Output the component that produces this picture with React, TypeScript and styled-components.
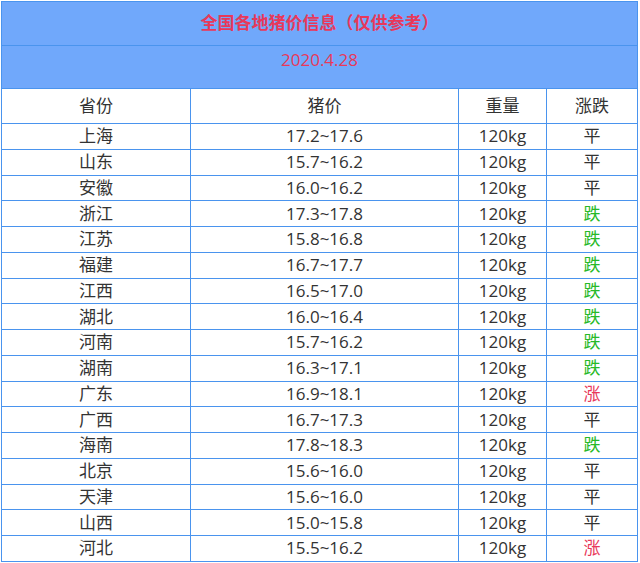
import React from 'react';
import styled, { createGlobalStyle } from 'styled-components';

const GlobalStyle = createGlobalStyle`
    body {
        margin: 0;
        background: #ffffff;
        font-family: 'Open Sans', 'Noto Sans CJK SC', sans-serif;
    }
`;

const COLORS = {
    line: '#4a94ee',
    headBg: '#70a8fb',
    red: '#e8385a',
    green: '#27b927',
    text: '#333333',
};

const Wrapper = styled.div`
    padding: 1px 0 0 1px;
`;

const Table = styled.table`
    width: 636px;
    border-collapse: collapse;
    table-layout: fixed;
    border: 1px solid ${COLORS.line};
    color: ${COLORS.text};
    font-size: 17px;
`;

const TitleRow = styled.tr<{ $height: number }>`
    height: ${(p) => p.$height}px;
`;

const TitleCell = styled.td<{ $bold?: boolean }>`
    background: ${COLORS.headBg};
    color: ${COLORS.red};
    font-weight: ${(p) => (p.$bold ? 700 : 400)};
    text-align: center;
    vertical-align: top;
    line-height: 20px;
    padding: ${(p) => (p.$bold ? '11px 0 0' : '4px 0 0')};
    border: 1px solid ${COLORS.line};
`;

const Row = styled.tr<{ $height: number }>`
    height: ${(p) => p.$height}px;
`;

const Cell = styled.td<{ $color?: string }>`
    padding: 0;
    border: 1px solid ${COLORS.line};
    text-align: center;
    line-height: 20px;
    color: ${(p) => p.$color || COLORS.text};
`;

type Trend = '平' | '跌' | '涨';

interface PriceRow {
    province: string;
    price: string;
    trend: Trend;
}

const rows: PriceRow[] = [
    { province: '上海', price: '17.2~17.6', trend: '平' },
    { province: '山东', price: '15.7~16.2', trend: '平' },
    { province: '安徽', price: '16.0~16.2', trend: '平' },
    { province: '浙江', price: '17.3~17.8', trend: '跌' },
    { province: '江苏', price: '15.8~16.8', trend: '跌' },
    { province: '福建', price: '16.7~17.7', trend: '跌' },
    { province: '江西', price: '16.5~17.0', trend: '跌' },
    { province: '湖北', price: '16.0~16.4', trend: '跌' },
    { province: '河南', price: '15.7~16.2', trend: '跌' },
    { province: '湖南', price: '16.3~17.1', trend: '跌' },
    { province: '广东', price: '16.9~18.1', trend: '涨' },
    { province: '广西', price: '16.7~17.3', trend: '平' },
    { province: '海南', price: '17.8~18.3', trend: '跌' },
    { province: '北京', price: '15.6~16.0', trend: '平' },
    { province: '天津', price: '15.6~16.0', trend: '平' },
    { province: '山西', price: '15.0~15.8', trend: '平' },
    { province: '河北', price: '15.5~16.2', trend: '涨' },
];

const trendColor = (t: Trend) => {
    if (t === '跌') return COLORS.green;
    if (t === '涨') return COLORS.red;
    return COLORS.text;
};

export default function App() {
    return (
        <Wrapper>
            <GlobalStyle />
            <Table>
                <colgroup>
                    <col style={{ width: 189 }} />
                    <col style={{ width: 268 }} />
                    <col style={{ width: 88 }} />
                    <col style={{ width: 91 }} />
                </colgroup>
                <tbody>
                    <TitleRow $height={44}>
                        <TitleCell colSpan={4} $bold>
                            全国各地猪价信息（仅供参考）
                        </TitleCell>
                    </TitleRow>
                    <TitleRow $height={43}>
                        <TitleCell colSpan={4}>2020.4.28</TitleCell>
                    </TitleRow>
                    <Row $height={35}>
                        <Cell>省份</Cell>
                        <Cell>猪价</Cell>
                        <Cell>重量</Cell>
                        <Cell>涨跌</Cell>
                    </Row>
                    {rows.map((row) => (
                        <Row key={row.province} $height={25.75}>
                            <Cell>{row.province}</Cell>
                            <Cell>{row.price}</Cell>
                            <Cell>120kg</Cell>
                            <Cell $color={trendColor(row.trend)}>{row.trend}</Cell>
                        </Row>
                    ))}
                </tbody>
            </Table>
        </Wrapper>
    );
}
